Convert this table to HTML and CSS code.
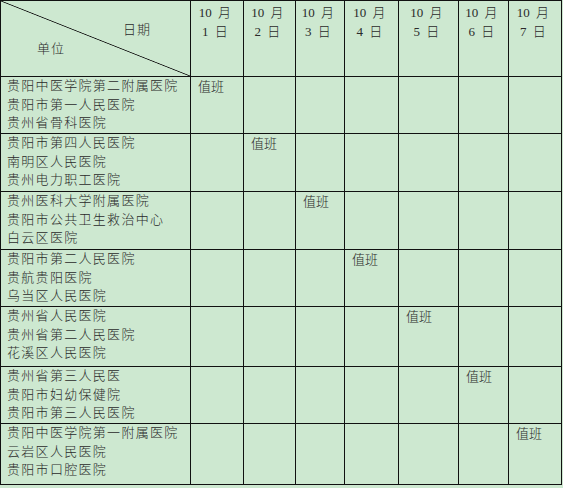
FILE: index.html
```html
<!DOCTYPE html>
<html lang="zh-CN">
<head>
<meta charset="utf-8">
<title>值班表</title>
<link rel="stylesheet" href="styles.css">
</head>
<body>
<div class="sheet">
  <div class="cell corner">
    <div class="corner-date">日期</div>
    <div class="corner-unit">单位</div>
  </div>
  <div class="cell head">10 月<br>1 日</div>
  <div class="cell head">10 月<br>2 日</div>
  <div class="cell head">10 月<br>3 日</div>
  <div class="cell head">10 月<br>4 日</div>
  <div class="cell head">10 月<br>5 日</div>
  <div class="cell head">10 月<br>6 日</div>
  <div class="cell head">10 月<br>7 日</div>

  <div class="cell names">贵阳中医学院第二附属医院<br>贵阳市第一人民医院<br>贵州省骨科医院</div>
  <div class="cell duty">值班</div><div class="cell"></div><div class="cell"></div><div class="cell"></div><div class="cell"></div><div class="cell"></div><div class="cell"></div>

  <div class="cell names">贵阳市第四人民医院<br>南明区人民医院<br>贵州电力职工医院</div>
  <div class="cell"></div><div class="cell duty">值班</div><div class="cell"></div><div class="cell"></div><div class="cell"></div><div class="cell"></div><div class="cell"></div>

  <div class="cell names">贵州医科大学附属医院<br>贵阳市公共卫生救治中心<br>白云区医院</div>
  <div class="cell"></div><div class="cell"></div><div class="cell duty">值班</div><div class="cell"></div><div class="cell"></div><div class="cell"></div><div class="cell"></div>

  <div class="cell names">贵阳市第二人民医院<br>贵航贵阳医院<br>乌当区人民医院</div>
  <div class="cell"></div><div class="cell"></div><div class="cell"></div><div class="cell duty">值班</div><div class="cell"></div><div class="cell"></div><div class="cell"></div>

  <div class="cell names">贵州省人民医院<br>贵州省第二人民医院<br>花溪区人民医院</div>
  <div class="cell"></div><div class="cell"></div><div class="cell"></div><div class="cell"></div><div class="cell duty">值班</div><div class="cell"></div><div class="cell"></div>

  <div class="cell names">贵州省第三人民医<br>贵阳市妇幼保健院<br>贵阳市第三人民医院</div>
  <div class="cell"></div><div class="cell"></div><div class="cell"></div><div class="cell"></div><div class="cell"></div><div class="cell duty">值班</div><div class="cell"></div>

  <div class="cell names">贵阳中医学院第一附属医院<br>云岩区人民医院<br>贵阳市口腔医院</div>
  <div class="cell"></div><div class="cell"></div><div class="cell"></div><div class="cell"></div><div class="cell"></div><div class="cell"></div><div class="cell duty">值班</div>
</div>
</body>
</html>
```

FILE: styles.css
```css
html, body {
  margin: 0;
  padding: 0;
  background: #cde8d0;
}

body {
  width: 563px;
  height: 488px;
  overflow: hidden;
  font-family: "Liberation Serif", "Noto Sans CJK SC", serif;
  font-size: 13px;
  font-weight: 300;
  color: #2a2a2a;
}

.sheet {
  display: grid;
  grid-template-columns: 189px 52px 51px 48px 53px 59px 49px 52px;
  grid-template-rows: 75px 56px 57px 57px 56px 59px 56px 60px;
  gap: 1px;
  padding: 1px;
  width: max-content;
  background: #111;
}

.cell {
  background: #cde8d0;
  line-height: 18.5px;
}

.corner {
  display: flex;
  flex-direction: column;
  padding-top: 20px;
  background:
    linear-gradient(to top right, transparent calc(50% - 0.8px), #111 50%, transparent calc(50% + 0.8px)),
    #cde8d0;
}

.corner-date {
  padding-left: 122px;
  letter-spacing: 1px;
}

.corner-unit {
  padding-left: 36px;
  letter-spacing: 1px;
}

.head {
  text-align: center;
  padding-top: 2px;
  line-height: 19px;
  padding-right: 4px;
  word-spacing: 3px;
}

.names {
  padding-left: 6px;
  letter-spacing: 1.3px;
  white-space: nowrap;
}

.duty {
  padding-left: 7px;
  padding-top: 1px;
}
```
